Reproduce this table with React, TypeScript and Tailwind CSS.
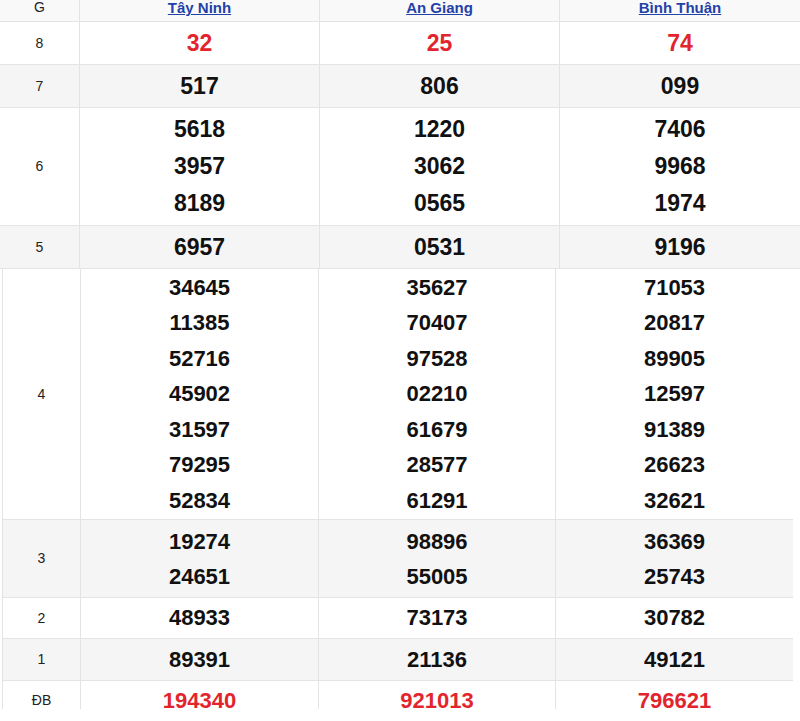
const provinces = ["Tây Ninh", "An Giang", "Bình Thuận"];

type Row = { label: string; values: string[][]; red?: boolean; gray?: boolean; h: string; lead: string };

const topRows: Row[] = [
  { label: "8", values: [["32"], ["25"], ["74"]], red: true, h: "h-[43px]", lead: "leading-[42px]" },
  { label: "7", values: [["517"], ["806"], ["099"]], gray: true, h: "h-[43px]", lead: "leading-[42px]" },
  {
    label: "6",
    values: [
      ["5618", "3957", "8189"],
      ["1220", "3062", "0565"],
      ["7406", "9968", "1974"],
    ],
    h: "h-[118px]",
    lead: "leading-[37px]",
  },
  { label: "5", values: [["6957"], ["0531"], ["9196"]], gray: true, h: "h-[43px]", lead: "leading-[42px]" },
];

const bottomRows: Row[] = [
  {
    label: "4",
    values: [
      ["34645", "11385", "52716", "45902", "31597", "79295", "52834"],
      ["35627", "70407", "97528", "02210", "61679", "28577", "61291"],
      ["71053", "20817", "89905", "12597", "91389", "26623", "32621"],
    ],
    h: "h-[251px]",
    lead: "leading-[35.5px]",
  },
  {
    label: "3",
    values: [
      ["19274", "24651"],
      ["98896", "55005"],
      ["36369", "25743"],
    ],
    gray: true,
    h: "h-[78px]",
    lead: "leading-[35px]",
  },
  { label: "2", values: [["48933"], ["73173"], ["30782"]], h: "h-[41px]", lead: "leading-[40px]" },
  { label: "1", values: [["89391"], ["21136"], ["49121"]], gray: true, h: "h-[42px]", lead: "leading-[41px]" },
  { label: "ĐB", values: [["194340"], ["921013"], ["796621"]], red: true, h: "h-[40px]", lead: "leading-[38px]" },
];

function ResultRow({ row, cols, size }: { row: Row; cols: string; size: string }) {
  return (
    <div className={`grid ${cols} ${row.h} border-b border-[#e4e4e4] ${row.gray ? "bg-[#f6f5f6]" : "bg-white"}`}>
      <div className="flex items-center justify-center border-r border-[#e4e4e4] text-[14px] text-[#222]">{row.label}</div>
      {row.values.map((vals, i) => (
        <div
          key={i}
          className={`flex flex-col items-center justify-center ${i < 2 ? "border-r border-[#e4e4e4]" : ""} ${size} font-bold ${row.lead} ${row.red ? "text-[#e2252d]" : "text-[#111]"}`}
        >
          {vals.map((v, j) => (
            <span key={j}>{v}</span>
          ))}
        </div>
      ))}
    </div>
  );
}

export default function App() {
  return (
    <div className="w-[800px] h-[721px] overflow-hidden bg-white font-['Liberation_Sans',Arial,sans-serif]">
      <div className="w-full">
        <div className="grid grid-cols-[80px_240px_240px_240px] h-[22px] border-b border-[#e4e4e4] bg-[#f9f9f9]">
          <div className="flex items-start justify-center border-r border-[#e4e4e4] text-[14px] leading-[15px] text-[#222]">G</div>
          {provinces.map((p, i) => (
            <div
              key={p}
              className={`flex items-start justify-center ${i < 2 ? "border-r border-[#e4e4e4]" : ""} text-[15px] leading-[16px] font-bold text-[#2242a8] underline`}
            >
              {p}
            </div>
          ))}
        </div>
        {topRows.map((r) => (
          <ResultRow key={r.label} row={r} cols="grid-cols-[80px_240px_240px_240px]" size="text-[23px]" />
        ))}
      </div>
      <div className="ml-[2px] w-[791px] h-[440px] overflow-hidden border-l border-[#e4e4e4]">
        {bottomRows.map((r) => (
          <ResultRow key={r.label} row={r} cols="grid-cols-[78px_238px_237px_237px]" size="text-[22px]" />
        ))}
      </div>
    </div>
  );
}
